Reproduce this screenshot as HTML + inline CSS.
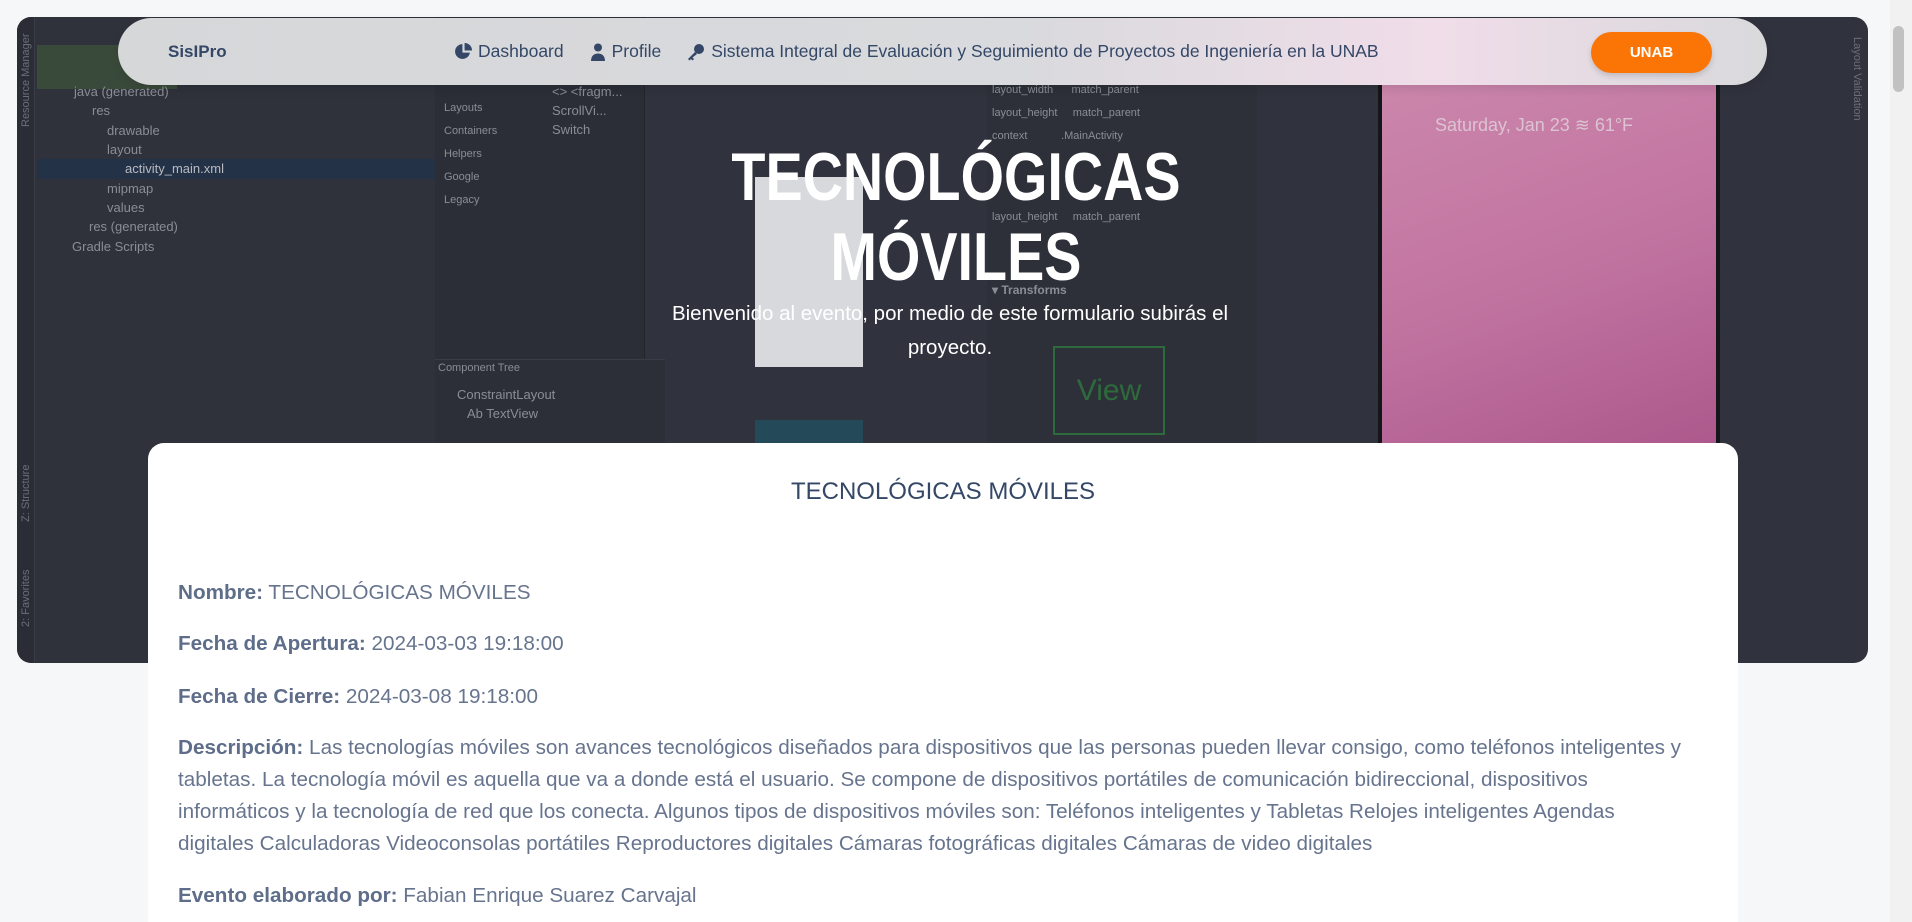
<!DOCTYPE html>
<html><head><meta charset="utf-8"><style>
*{margin:0;padding:0;box-sizing:border-box}
html,body{width:1912px;height:922px;overflow:hidden;background:#f6f7f9;font-family:"Liberation Sans",sans-serif;position:relative}
.hero{position:absolute;left:17px;top:17px;width:1851px;height:646px;border-radius:14px;overflow:hidden;background:#30323d}
.lp{position:absolute;left:0;top:0;width:18px;height:100%;background:#2b2d36;border-right:1px solid #3a3c46}
.proj{position:absolute;left:18px;top:0;width:418px;height:100%;background:#2f313b}
.sel{position:absolute;left:20px;top:142px;width:416px;height:20px;background:#243248}
.green{position:absolute;left:20px;top:28px;width:140px;height:44px;background:#3a4a3a}
.pal{position:absolute;left:418px;top:0;width:210px;height:100%;background:#2c2e37;border-right:1px solid #25262d}
.ctree{position:absolute;left:418px;top:342px;width:230px;height:300px;background:#2d2f38;border-top:1px solid #3b3d46}
.attr{position:absolute;left:970px;top:0;width:270px;height:440px;background:#2e3039}
.phone{position:absolute;left:1361px;top:60px;width:342px;height:400px;background:linear-gradient(160deg,#cb87ac,#c173a0 50%,#a9558a);border-left:4px solid #151619;border-right:4px solid #151619}
.white{position:absolute;left:738px;top:160px;width:108px;height:190px;background:#d8d9dd}
.teal{position:absolute;left:738px;top:403px;width:108px;height:60px;background:#244a5a}
.view{position:absolute;left:1036px;top:329px;width:112px;height:89px;border:2px solid #2d6b3c;color:#2d6b3c;font-size:30px;text-align:center;line-height:85px}
.ide{position:absolute;color:#8a8d96;font-size:13px;white-space:nowrap}
.rv{position:absolute;color:#6b6e78;font-size:11px;transform:rotate(-90deg);transform-origin:left top;white-space:nowrap}
.nav{position:absolute;left:118px;top:18px;width:1649px;height:67px;border-radius:34px;background:linear-gradient(90deg,#d6d7d9,#d9dadd 55%,#f0dde9 80%,#d9d9dc);box-shadow:0 4px 10px rgba(0,0,0,.1)}
.brand{position:absolute;left:50px;top:24px;font-weight:bold;font-size:17px;color:#344767}
.links{position:absolute;left:337px;top:23px;font-size:17.5px;color:#344767;white-space:nowrap;display:flex;gap:26px;align-items:center}
.links span{display:flex;align-items:center;gap:6px}
.btn{position:absolute;left:1473px;top:14px;width:121px;height:41px;border-radius:21px;background:#fb7506;color:#fff;font-weight:bold;font-size:15px;text-align:center;line-height:41px;box-shadow:0 3px 6px rgba(0,0,0,.15)}
.h1{position:absolute;left:0;width:1912px;text-align:center;color:#fff;font-weight:bold;font-size:68px;line-height:80px;top:137px;transform:scaleX(0.82)}
.sub{position:absolute;left:630px;width:640px;text-align:center;color:#fff;font-size:20.5px;line-height:34px;top:297px}
.card{position:absolute;left:148px;top:443px;width:1590px;height:479px;background:#fff;border-radius:16px 16px 0 0;overflow:hidden}
.ct{position:absolute;top:35px;width:100%;text-align:center;font-size:24px;color:#344767}
.row{position:absolute;left:30px;font-size:20.7px;color:#67748e;white-space:nowrap;line-height:32px}
.row b{color:#5e6d8a}
.scroll{position:absolute;left:1890px;top:0;width:22px;height:922px;background:#f1f1f1}
.thumb{position:absolute;left:1893px;top:26px;width:11px;height:66px;border-radius:6px;background:#c1c1c1}
</style></head><body>
<div class="hero">
<div class="lp"></div><div class="proj"></div><div class="green"></div><div class="sel"></div>
<div class="pal"></div><div class="ctree"></div><div class="attr"></div>
<div class="white"></div><div class="teal"></div><div class="view">View</div>
<div class="phone"></div>
<div class="ide" style="left:57px;top:67px">java (generated)</div>
<div class="ide" style="left:75px;top:86px">res</div>
<div class="ide" style="left:90px;top:106px">drawable</div>
<div class="ide" style="left:90px;top:125px">layout</div>
<div class="ide" style="left:108px;top:144px;color:#b8bac0">activity_main.xml</div>
<div class="ide" style="left:90px;top:164px">mipmap</div>
<div class="ide" style="left:90px;top:183px">values</div>
<div class="ide" style="left:72px;top:202px">res (generated)</div>
<div class="ide" style="left:55px;top:222px">Gradle Scripts</div>
<div class="ide" style="left:427px;top:85px;font-size:11px">Layouts</div>
<div class="ide" style="left:427px;top:108px;font-size:11px">Containers</div>
<div class="ide" style="left:427px;top:131px;font-size:11px">Helpers</div>
<div class="ide" style="left:427px;top:154px;font-size:11px">Google</div>
<div class="ide" style="left:427px;top:177px;font-size:11px">Legacy</div>
<div class="ide" style="left:535px;top:67px">&lt;&gt; &lt;fragm...</div>
<div class="ide" style="left:535px;top:86px">ScrollVi...</div>
<div class="ide" style="left:535px;top:105px">Switch</div>
<div class="ide" style="left:421px;top:345px;font-size:11px">Component Tree</div>
<div class="ide" style="left:440px;top:370px">ConstraintLayout</div>
<div class="ide" style="left:450px;top:389px">Ab TextView</div>
<div class="ide" style="left:975px;top:67px;font-size:11px">layout_width &nbsp;&nbsp;&nbsp;&nbsp; match_parent</div>
<div class="ide" style="left:975px;top:90px;font-size:11px">layout_height &nbsp;&nbsp;&nbsp; match_parent</div>
<div class="ide" style="left:975px;top:113px;font-size:11px">context &nbsp;&nbsp;&nbsp;&nbsp;&nbsp;&nbsp;&nbsp;&nbsp;&nbsp; .MainActivity</div>
<div class="ide" style="left:975px;top:194px;font-size:11px">layout_height &nbsp;&nbsp;&nbsp; match_parent</div>
<div class="ide" style="left:975px;top:266px;font-size:12px;font-weight:bold">▾ Transforms</div>
<div class="ide" style="left:1418px;top:98px;font-size:18px;color:#dcc3d2">Saturday, Jan 23 ≋ 61°F</div>
<div class="rv" style="left:3px;top:110px">Resource Manager</div>
<div class="rv" style="left:3px;top:505px">Z: Structure</div>
<div class="rv" style="left:3px;top:610px">2: Favorites</div>
<div class="rv" style="top:20px;transform:rotate(90deg);transform-origin:left top;left:1846px">Layout Validation</div>
</div>
<div class="nav">
<div class="brand">SisIPro</div>
<div class="links">
<span><svg width="17" height="17" viewBox="0 0 16 16"><path d="M7 1a7 7 0 1 0 7 8H7z" fill="#344767"/><path d="M9 0v7h7A7 7 0 0 0 9 0z" fill="#344767"/></svg>Dashboard</span>
<span><svg width="16" height="18" viewBox="0 0 16 18"><circle cx="8" cy="4.5" r="4" fill="#344767"/><path d="M1 18c0-5 3-7.5 7-7.5s7 2.5 7 7.5z" fill="#344767"/></svg>Profile</span>
<span><svg width="18" height="18" viewBox="0 0 18 18"><circle cx="12" cy="6" r="5" fill="#344767"/><path d="M8 9L1 16l1.5 1.5 1.5-1.5 1.5 1.5 1.5-1.5-1.5-1.5L10 11z" fill="#344767"/></svg>Sistema Integral de Evaluación y Seguimiento de Proyectos de Ingeniería en la UNAB</span>
</div>
<div class="btn">UNAB</div>
</div>
<div class="h1">TECNOLÓGICAS<br>MÓVILES</div>
<div class="sub">Bienvenido al evento, por medio de este formulario subirás el proyecto.</div>
<div class="card">
<div class="ct">TECNOLÓGICAS MÓVILES</div>
<div class="row" style="top:134px"><b>Nombre:</b> TECNOLÓGICAS MÓVILES</div>
<div class="row" style="top:185px"><b>Fecha de Apertura:</b> 2024-03-03 19:18:00</div>
<div class="row" style="top:238px"><b>Fecha de Cierre:</b> 2024-03-08 19:18:00</div>
<div class="row" style="top:289px"><b>Descripción:</b> Las tecnologías móviles son avances tecnológicos diseñados para dispositivos que las personas pueden llevar consigo, como teléfonos inteligentes y<br>tabletas. La tecnología móvil es aquella que va a donde está el usuario. Se compone de dispositivos portátiles de comunicación bidireccional, dispositivos<br>informáticos y la tecnología de red que los conecta. Algunos tipos de dispositivos móviles son: Teléfonos inteligentes y Tabletas Relojes inteligentes Agendas<br>digitales Calculadoras Videoconsolas portátiles Reproductores digitales Cámaras fotográficas digitales Cámaras de video digitales</div>
<div class="row" style="top:437px"><b>Evento elaborado por:</b> Fabian Enrique Suarez Carvajal</div>
</div>
<div class="scroll"></div><div class="thumb"></div>
</body></html>
